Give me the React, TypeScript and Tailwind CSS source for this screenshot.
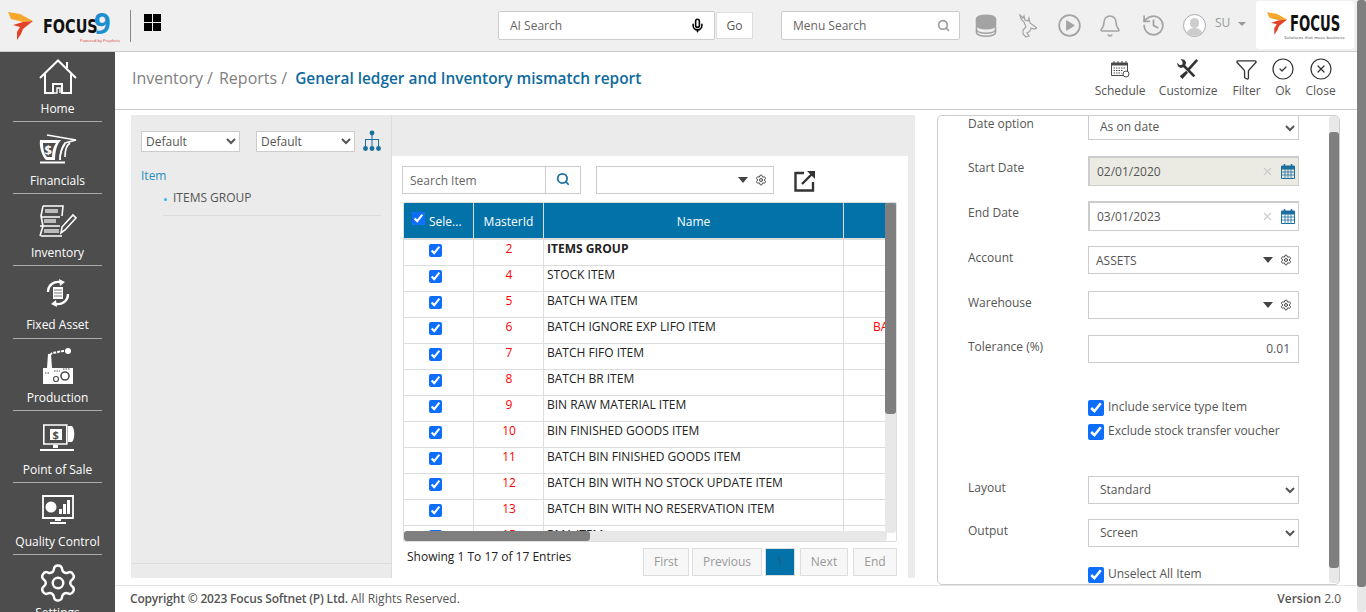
import React from 'react';
import { Bell, CircleCheck, CircleX, Funnel, History, Mic, Search, Settings, X } from 'lucide-react';

const ROWS = [
  { id: 2, name: 'ITEMS GROUP', bold: true },
  { id: 4, name: 'STOCK ITEM' },
  { id: 5, name: 'BATCH WA ITEM' },
  { id: 6, name: 'BATCH IGNORE EXP LIFO ITEM', extra: 'BA' },
  { id: 7, name: 'BATCH FIFO ITEM' },
  { id: 8, name: 'BATCH BR ITEM' },
  { id: 9, name: 'BIN RAW MATERIAL ITEM' },
  { id: 10, name: 'BIN FINISHED GOODS ITEM' },
  { id: 11, name: 'BATCH BIN FINISHED GOODS ITEM' },
  { id: 12, name: 'BATCH BIN WITH NO STOCK UPDATE ITEM' },
  { id: 13, name: 'BATCH BIN WITH NO RESERVATION ITEM' },
  { id: 15, name: 'RMA ITEM' },
];

const Flame = ({ className }: { className: string }) => (
  <svg viewBox="0 0 26 28" className={className}>
    <polygon points="0,0 12,2 25,9 15,10 7,8 3,7" fill="#f7a72b" />
    <polygon points="25,9 15,17 13,22 9,28 9,20 12,15 5,13 15,10" fill="#e4432a" />
  </svg>
);

const HomeIcon = () => (
  <svg viewBox="0 0 38 36" className="w-[38px] h-[36px]" fill="none" stroke="white" strokeWidth="2">
    <path d="M1 19 19 1.5 37 19M6 15v19h8v-9h9v9h9V15M28 9V3" />
    <path d="M14 34h4v-5h3v5" strokeWidth="1.4" />
  </svg>
);

const FinancialsIcon = () => (
  <svg viewBox="0 0 38 30" className="w-[38px] h-[30px]" fill="none" stroke="white" strokeWidth="1.6">
    <path d="M8 1 37 6 26 9c-3 4-5 10-5 17" />
    <path d="M1 6h21c-4 4-6 11-6 20H7C3 22 0 13 1 6z" fill="white" stroke="none" />
    <path d="M4 9h13c-3 4-4 9-4 14H8C5 20 4 14 4 9z" fill="#4d4d4d" stroke="none" />
    <path d="M26 10c-3 4-5 10-5 16M31 9c-3 2-5 8-5 14" />
    <path d="M1 28.5h25" strokeWidth="2" />
    <text x="5.5" y="21" fontSize="13" fontWeight="700" fill="white" stroke="none" fontFamily="'Open Sans', sans-serif">$</text>
  </svg>
);

const InventoryIcon = () => (
  <svg viewBox="0 0 38 32" className="w-[38px] h-[32px]" fill="none" stroke="white" strokeWidth="1.6">
    <path d="M4 1h20l-1 10M2 12h19M1 21h20M2 31h21" />
    <path d="M4 1 2 11l2 10-3 10" />
    <path d="M6 4h13v4H6zM5 14h12v4H5zM5 24h15v4H5z" fill="#bbb" stroke="none" />
    <path d="M22 28l1-6L34 10l3 3-11 12z" strokeWidth="1.6" />
  </svg>
);

const FixedAssetIcon = () => (
  <svg viewBox="0 0 24 28" className="w-[24px] h-[28px]" fill="none" stroke="white" strokeWidth="2.4">
    <path d="M2 13C2 6 8 2 14 3" />
    <path d="M22 15c0 7-6 11-12 10" />
    <path d="M13 0l6 3-5 4zM11 28l-6-3 5-4z" fill="white" stroke="none" />
    <path d="M7 8h10v12H7z" fill="white" stroke="none" />
    <path d="M8 11h8M8 14h8M8 17h8" stroke="#777" strokeWidth="1" />
  </svg>
);

const ProductionIcon = () => (
  <svg viewBox="0 0 32 36" className="w-[32px] h-[36px]">
    <path d="M1 36V20h4l1-14h3l1 14h21v16z" fill="white" />
    <path d="M8 7c2-3 5-2 8-3s5-1 8-1" fill="none" stroke="white" strokeWidth="2" strokeDasharray="3 1" />
    <circle cx="26" cy="3" r="3" fill="white" />
    <circle cx="23" cy="28" r="4" fill="white" stroke="#4d4d4d" strokeWidth="1.6" />
    <circle cx="14" cy="31" r="2.5" fill="white" stroke="#4d4d4d" strokeWidth="1.2" />
    <path d="M3 25h5M12 23h6M21 21h7" stroke="#4d4d4d" strokeWidth="1.2" strokeDasharray="1.5 1" />
  </svg>
);

const PosIcon = () => (
  <svg viewBox="0 0 36 28" className="w-[36px] h-[28px]">
    <path d="M3.8 1h23v19h-23z" fill="none" stroke="white" strokeWidth="1.6" />
    <path d="M28 2h4c3 3 3 13 0 16h-4z" fill="white" />
    <path d="M13 21h5v3h-5zM0 25h34v2H0z" fill="white" />
    <path d="M10 5h12v11H10z" fill="white" />
    <text x="12.5" y="15" fontSize="11" fontWeight="700" fill="#4d4d4d" fontFamily="'Open Sans', sans-serif">$</text>
  </svg>
);

const QualityIcon = () => (
  <svg viewBox="0 0 34 30" className="w-[34px] h-[30px]">
    <path d="M2 1h30v22H2z" fill="none" stroke="white" strokeWidth="1.8" />
    <circle cx="10" cy="12" r="5.5" fill="white" />
    <path d="M18 19h3v-5h-3zM22 19h3V9h-3zM26 19h3V5h-3z" fill="white" />
    <path d="M14 24h6v2h-6zM9 27h16v2H9z" fill="white" />
  </svg>
);

const NAV = [
  { label: 'Home', icon: <HomeIcon /> },
  { label: 'Financials', icon: <FinancialsIcon /> },
  { label: 'Inventory', icon: <InventoryIcon /> },
  { label: 'Fixed Asset', icon: <FixedAssetIcon /> },
  { label: 'Production', icon: <ProductionIcon /> },
  { label: 'Point of Sale', icon: <PosIcon /> },
  { label: 'Quality Control', icon: <QualityIcon /> },
];

const DatabaseIcon = () => (
  <svg viewBox="0 0 22 24" className="w-[22px] h-[24px]" fill="#a3a3a3" stroke="#a3a3a3" strokeWidth="1.6">
    <ellipse cx="11" cy="5" rx="9.5" ry="3.8" />
    <path d="M1.5 5v6c0 2.2 4.2 3.8 9.5 3.8s9.5-1.6 9.5-3.8V5c0 2.2-4.2 3.8-9.5 3.8S1.5 7.2 1.5 5z" />
    <path d="M1.5 12v6.5c0 2.2 4.2 3.8 9.5 3.8s9.5-1.6 9.5-3.8V12" fill="none" />
    <path d="M1.5 16c1 2 4.5 3.2 9.5 3.2s8.5-1.2 9.5-3.2" fill="none" />
  </svg>
);

const DeerIcon = () => (
  <svg viewBox="0 0 18 24" className="w-[18px] h-[24px]" fill="none" stroke="#a3a3a3" strokeWidth="1.2">
    <path d="M1 1l3 3 1-2 1 4 3 1 1-3 1 5 7 5-3 1-3-1c0 3-2 4-4 5l2 3-3 1-3-3v-4l3-3-2-5-3-3z" />
  </svg>
);

const PlayIcon = () => (
  <svg viewBox="0 0 24 24" className="w-[23px] h-[23px]" fill="#a3a3a3" stroke="#a3a3a3">
    <circle cx="12" cy="12" r="10.8" fill="none" strokeWidth="1.8" />
    <path d="M9 7l8 5-8 5z" />
  </svg>
);

const ScheduleIcon = () => (
  <svg viewBox="0 0 20 18" className="w-[20px] h-[18px]" fill="none" stroke="#4a4a4a">
    <path d="M1.5 3.5h16v12h-16z" />
    <path d="M1.5 3h16v2h-16z" fill="#4a4a4a" />
    <path d="M4 1v3M8 1v3M12 1v3M16 1v3" />
    <path d="M3.5 8h12M3.5 10.5h10M3.5 13h8" strokeDasharray="1.5 1" />
    <circle cx="16" cy="14" r="3" fill="white" />
  </svg>
);

const CalendarIcon = () => (
  <svg viewBox="0 0 14 15" className="w-[14px] h-[15px]" fill="none" stroke="#1a6f9f">
    <path d="M.5 2.5h13v12H.5z" />
    <path d="M.5 2h13v3H.5z" fill="#1a6f9f" />
    <path d="M3.5 0v3M10.5 0v3" strokeWidth="1.5" />
    <path d="M.5 8h13M.5 11h13M4 5v9M7 5v9M10 5v9" strokeWidth=".8" />
  </svg>
);

const TreeIcon = () => (
  <svg viewBox="0 0 18 22" className="w-[18px] h-[22px]" fill="#1a6f9f">
    <circle cx="9" cy="3" r="2.4" />
    <path d="M8.5 4h1v5h6.5v7h-1v-6H9.5v6h-1v-6H3v6H2V9h6.500z" />
    <circle cx="2.5" cy="18.5" r="2.4" />
    <circle cx="9" cy="18.5" r="2.4" />
    <circle cx="15.5" cy="18.5" r="2.4" />
  </svg>
);

const ExportIcon = () => (
  <svg viewBox="0 0 22 22" className="w-[22px] h-[22px]" fill="none" stroke="#333" strokeWidth="2.4">
    <path d="M10 3H1.5v17.500h17.500V12" />
    <path d="M8 14 19 3" />
    <path d="M13 1h8v8z" fill="#333" stroke="none" />
  </svg>
);

const Caret = () => <span className="w-0 h-0 border-x-[5px] border-x-transparent border-t-[6px] border-t-[#444]" />;

const ToolButton = ({ icon, label, className }: { icon: React.ReactNode; label: string; className: string }) => (
  <div className={`flex flex-col items-center ${className}`}>
    <div className="h-[22px] flex items-center justify-center">{icon}</div>
    <span className="text-[12px] leading-[16px] mt-[3px] text-[#555]">{label}</span>
  </div>
);

const FieldLabel = ({ text, top = 4 }: { text: string; top?: number }) => (
  <div className={`w-[120px] shrink-0 text-[12px] leading-[16px] text-[#555] ${top === 0 ? 'pt-0' : 'pt-[4px]'}`}>{text}</div>
);

const ComboField = ({ value }: { value: string }) => (
  <div className="w-[211px] h-[28px] border border-[#ccc] bg-white flex items-center pl-[7px] pr-[6px] text-[12px] text-[#555]">
    <span className="flex-1 pt-[2px]">{value}</span>
    <Caret />
    <Settings size={12} className="ml-[7px] text-[#444]" />
  </div>
);

const DateField = ({ value, disabled }: { value: string; disabled?: boolean }) => (
  <div className={`w-[211px] h-[30px] border-2 border-[#ccc] border-r border-b flex items-center pl-[7px] pr-[3px] text-[12px] text-[#555] ${disabled ? 'bg-[#ebebe4]' : 'bg-white'}`}>
    <span className="flex-1">{value}</span>
    <X size={13} className="text-[#ccc] mr-[7px]" />
    <CalendarIcon />
  </div>
);

const CheckRow = ({ label, className }: { label: string; className: string }) => (
  <label className={`flex items-center ml-[120px] text-[12px] leading-[16px] text-[#555] ${className}`}>
    <input type="checkbox" defaultChecked className="w-[16px] h-[16px] m-0 accent-[#0d6efd]" />
    <span className="ml-[4px] -mt-[2px]">{label}</span>
  </label>
);

const FormSelect = ({ value, h, noTop }: { value: string; h: string; noTop?: boolean }) => (
  <select defaultValue={value} className={`w-[211px] ${h} border border-[#ccc] ${noTop ? 'border-t-0' : ''} bg-white text-[12px] text-[#555] pl-[7px] pr-[4px] pb-[2px]`}>
    <option>{value}</option>
  </select>
);

export default function App() {
  return (
    <div className="w-[1366px] h-[612px] overflow-hidden relative flex flex-col bg-white text-[#555] font-['Open_Sans','Liberation_Sans',sans-serif]">
      {/* Top bar */}
      <div className="h-[52px] shrink-0 bg-[#f0f0f0] border-b border-[#ccc] flex items-center">
        <Flame className="w-[26px] h-[28px] ml-[8px] shrink-0" />
        <div className="ml-[9px] relative w-[72px] h-[30px] flex items-center">
          <span className="origin-left scale-x-[.72] font-['DejaVu_Sans',sans-serif] font-bold text-[20px] leading-[22px] text-[#111]">FOCUS</span>
          <span className="absolute left-[51px] -top-[2px] text-[29px] leading-[28px] font-bold text-[#1c8fd0]">9</span>
          <span className="absolute left-[37px] top-[27px] text-[4px] leading-[5px] text-[#d33] whitespace-nowrap">Powered by Prophets</span>
        </div>
        <div className="w-px h-[32px] bg-[#888] ml-[15px]" />
        <div className="grid grid-cols-2 gap-px w-[17px] h-[17px] ml-[13px] -mt-[6px]">
          <span className="bg-black" /><span className="bg-black" /><span className="bg-black" /><span className="bg-black" />
        </div>
        <div className="ml-[337px] w-[217px] h-[29px] bg-white border border-[#ccc] rounded-[2px] flex items-center pl-[11px] pr-[9px] text-[12px] text-[#666]">
          <span className="flex-1">AI Search</span>
          <Mic size={15} className="text-black" strokeWidth={2.5} />
        </div>
        <div className="ml-px w-[37px] h-[27px] bg-white border border-[#ddd] flex items-center justify-center text-[12px] text-[#555]">Go</div>
        <div className="ml-[28px] w-[179px] h-[29px] bg-white border border-[#ccc] rounded-[2px] flex items-center pl-[11px] pr-[9px] text-[12px] text-[#666]">
          <span className="flex-1">Menu Search</span>
          <Search size={13} className="text-[#999]" strokeWidth={3} />
        </div>
        <div className="ml-[15px]"><DatabaseIcon /></div>
        <div className="ml-[22px]"><DeerIcon /></div>
        <div className="ml-[21px]"><PlayIcon /></div>
        <Bell size={24} className="ml-[17px] text-[#a3a3a3]" strokeWidth={1.5} />
        <History size={25} className="ml-[19px] text-[#a3a3a3]" strokeWidth={1.7} />
        <div className="ml-[17px] w-[23px] h-[23px] rounded-full border border-[#aaa] bg-white overflow-hidden flex flex-col items-center">
          <span className="w-[9px] h-[10px] rounded-full bg-[#ccc] mt-[3px]" />
          <span className="w-[17px] h-[8px] rounded-t-full bg-[#ccc]" />
        </div>
        <span className="ml-[9px] text-[12px] text-[#999] -mt-[5px]">SU</span>
        <span className="ml-[8px] -mt-[4px] w-0 h-0 border-x-[4px] border-x-transparent border-t-[4px] border-t-[#999]" />
        <div className="ml-[10px] w-[98px] h-[48px] -mt-[2px] bg-white rounded-[3px] relative flex items-center pl-[11px]">
          <Flame className="w-[21px] h-[23px] shrink-0 -mt-[3px]" />
          <div className="relative h-[30px] w-[50px] ml-[2px]">
            <span className="absolute left-0 top-[3px] origin-left scale-x-[.63] font-['DejaVu_Sans',sans-serif] font-bold text-[21px] leading-[22px] text-[#111]">FOCUS</span>
            <span className="absolute -left-[6px] top-[25px] text-[4px] leading-[5px] text-[#333] whitespace-nowrap tracking-[.2px]">Solutions that move business</span>
          </div>
        </div>
      </div>

      <div className="flex-1 flex min-h-0">
        {/* Sidebar */}
        <div className="w-[115px] shrink-0 bg-[#4d4d4d] overflow-hidden text-white">
          {NAV.map((n, i) => (
            <div key={n.label} className={`mx-[13px] border-b border-[#aaa] flex flex-col items-center ${i === 0 ? 'h-[70px]' : i === 3 ? 'h-[73px]' : 'h-[72px]'}`}>
              <div className={`flex items-center justify-center ${i === 0 ? 'h-[49px]' : 'h-[51px] pt-[2px]'}`}>{n.icon}</div>
              <span className="text-[12px] leading-[16px] whitespace-nowrap">{n.label}</span>
            </div>
          ))}
          <div className="flex flex-col items-center pt-[7px]">
            <Settings size={42} strokeWidth={1.4} />
            <span className="text-[12px] leading-[16px] mt-[1px]">Settings</span>
          </div>
        </div>

        {/* Main column */}
        <div className="flex-1 min-w-0 flex flex-col">
          <div className="h-[58px] shrink-0 border-b border-[#ccc] mr-[9px] flex items-start">
            <div className="ml-[17px] mt-[14px] flex items-baseline text-[16px] leading-[24px] whitespace-nowrap">
              <span className="text-[#7f7f7f]">Inventory /</span>
              <span className="text-[#7f7f7f] ml-[6px]">Reports /</span>
              <span className="text-[#0f6a9c] font-semibold ml-[8px] text-[15.4px]">General ledger and Inventory mismatch report</span>
            </div>
            <div className="ml-auto mr-[19px] w-[250px] h-full flex pt-[6px]">
              <ToolButton icon={<ScheduleIcon />} label="Schedule" className="w-[60px] ml-[3px]" />
              <ToolButton icon={<svg viewBox="0 0 24 24" className="w-[22px] h-[22px]" fill="#333"><path d="M4 1l4 1 2 3-1 3 11 11-2 2L7 10 4 11 1 9 0 5l3 3 3-1 0-3zM21 1l2 2-9 10-2-2zM10 14l2 2-6 7-3-3z" /></svg>} label="Customize" className="w-[64px] ml-[8px]" />
              <ToolButton icon={<Funnel size={23} strokeWidth={1.4} className="text-[#333]" />} label="Filter" className="w-[36px] ml-[10px]" />
              <ToolButton icon={<CircleCheck size={24} strokeWidth={1.2} className="text-[#333]" />} label="Ok" className="w-[24px] ml-[7px]" />
              <ToolButton icon={<CircleX size={24} strokeWidth={1.2} className="text-[#333]" />} label="Close" className="w-[36px] ml-[8px]" />
            </div>
          </div>

          <div className="flex-1 min-h-0 flex pt-[5px]">
            {/* Report area */}
            <div className="ml-[16px] w-[784px] h-[463px] bg-[#ebebeb] flex">
              <div className="w-[260px] shrink-0 flex flex-col relative">
                <div className="flex items-center pl-[10px] pt-[15px]">
                  <select className="w-[99px] h-[21px] border border-[#ccc] bg-white text-[12px] text-[#555]"><option>Default</option></select>
                  <select className="ml-[16px] w-[99px] h-[21px] border border-[#ccc] bg-white text-[12px] text-[#555]"><option>Default</option></select>
                  <div className="ml-[8px]"><TreeIcon /></div>
                </div>
                <div className="ml-[10px] mt-[16px] text-[12px] leading-[16px] text-[#2a8fc4]">Item</div>
                <div className="ml-[32px] mt-[5px] w-[218px] h-[27px] border-b border-[#ddd] flex text-[12px] leading-[16px] text-[#555]">
                  <span className="w-[3px] h-[3px] rounded-full bg-[#35b3ee] mt-[9px] ml-px" />
                  <span className="ml-[6px] mt-[1px]">ITEMS GROUP</span>
                </div>
                <div className="mt-auto mb-[14px] border-t border-[#ddd]" />
              </div>
              <div className="w-px bg-[#ddd]" />
              <div className="flex-1 min-w-0 flex flex-col pt-[41px]">
                <div className="w-[516px] h-[422px] bg-white pl-[11px] pr-[10px] pt-[10px] flex flex-col">
                  <div className="flex items-center h-[28px] shrink-0 -ml-px">
                    <div className="w-[179px] h-[28px] border border-[#ccc] flex items-center text-[12px] text-[#666]">
                      <span className="flex-1 pl-[7px] pt-[1px]">Search Item</span>
                      <span className="w-[35px] h-full border-l border-[#ccc] flex items-center justify-center">
                        <Search size={14} strokeWidth={3} className="text-[#1a6f9f] -mt-[3px]" />
                      </span>
                    </div>
                    <div className="ml-[15px] w-[178px] h-[28px] border border-[#ccc] flex items-center justify-end pr-[6px]">
                      <Caret />
                      <Settings size={12} className="ml-[7px] text-[#444]" />
                    </div>
                    <div className="ml-[20px] mt-[1px]"><ExportIcon /></div>
                  </div>
                  {/* Grid */}
                  <div className="relative mt-[8px] w-[494px] h-[340px] border border-[#ddd] rounded-[2px] overflow-hidden shrink-0">
                    <div className="flex h-[37px] bg-[#0272a9] border-b-2 border-[#ddd] text-white text-[12px]">
                      <div className="w-[70px] flex items-center pl-[8px] border-r border-[#ddd]">
                        <input type="checkbox" defaultChecked className="w-[13px] h-[13px] m-0 -mt-[5px] accent-[#0d6efd]" />
                        <span className="ml-[4px] pt-[2px]">Sele...</span>
                      </div>
                      <div className="w-[70px] flex items-center justify-center pt-[2px] border-r border-[#ddd]">MasterId</div>
                      <div className="w-[300px] flex items-center justify-center pt-[2px] border-r border-[#ddd]">Name</div>
                      <div className="flex-1" />
                    </div>
                    {ROWS.map(r => (
                      <div key={r.id} className="flex h-[26px] border-b border-[#ddd] text-[12px] leading-[16px]">
                        <div className="w-[70px] flex justify-center pt-[4px] pr-[7px] border-r border-[#ddd]">
                          <input type="checkbox" defaultChecked className="w-[13px] h-[13px] m-0 accent-[#0d6efd]" />
                        </div>
                        <div className="w-[70px] text-center pt-[1px] pl-px text-[#f00] border-r border-[#ddd]">{r.id}</div>
                        <div className={`w-[300px] pl-[3px] pt-[1px] text-[#222] border-r border-[#ddd] whitespace-nowrap ${r.bold ? 'font-bold' : ''}`}>{r.name}</div>
                        <div className="flex-1 pl-[29px] pt-[1px] text-[#f00] overflow-hidden">{r.extra}</div>
                      </div>
                    ))}
                    {/* Scrollbars */}
                    <div className="absolute right-0 top-0 w-[11px] h-[330px] bg-[#e8e8e8] rounded-[3px]">
                      <div className="w-full h-[211px] bg-[#7f7f7f] rounded-[3px]" />
                    </div>
                    <div className="absolute left-0 bottom-0 w-[483px] h-[10px] bg-[#e8e8e8] rounded-[3px]">
                      <div className="h-full w-[186px] bg-[#7f7f7f] rounded-[3px]" />
                    </div>
                  </div>
                  <div className="flex items-start w-[494px] mt-[6px]">
                    <span className="ml-[4px] text-[12px] leading-[16px] text-[#222] mt-[1px]">Showing 1 To 17 of 17 Entries</span>
                    <div className="ml-auto flex text-[12px] text-[#999]">
                      <span className="w-[46px] h-[28px] flex items-center justify-center border border-[#ddd] bg-[#f7f7f7]">First</span>
                      <span className="ml-[3px] w-[70px] h-[28px] flex items-center justify-center border border-[#ddd] bg-[#f7f7f7]">Previous</span>
                      <span className="ml-[3px] w-[30px] h-[28px] flex items-center justify-center border border-[#ddd] bg-[#0272a9] text-[#2a5d78]">1</span>
                      <span className="ml-[5px] w-[48px] h-[28px] flex items-center justify-center border border-[#ddd] bg-[#f7f7f7]">Next</span>
                      <span className="ml-[5px] w-[44px] h-[28px] flex items-center justify-center border border-[#ddd] bg-[#f7f7f7]">End</span>
                    </div>
                  </div>
                </div>
              </div>
            </div>

            {/* Form panel */}
            <div className="ml-[22px] relative w-[403px] h-[470px] border border-[#ccc] rounded-[5px] overflow-hidden pl-[30px]">
              <div className="flex">
                <FieldLabel text="Date option" top={0} />
                <FormSelect value="As on date" h="h-[24px]" noTop />
              </div>
              <div className="flex mt-[16px]">
                <FieldLabel text="Start Date" />
                <DateField value="02/01/2020" disabled />
              </div>
              <div className="flex mt-[15px]">
                <FieldLabel text="End Date" />
                <DateField value="03/01/2023" />
              </div>
              <div className="flex mt-[15px]">
                <FieldLabel text="Account" />
                <ComboField value="ASSETS" />
              </div>
              <div className="flex mt-[17px]">
                <FieldLabel text="Warehouse" />
                <ComboField value="" />
              </div>
              <div className="flex mt-[16px]">
                <FieldLabel text="Tolerance (%)" />
                <div className="w-[211px] h-[28px] border border-[#ccc] bg-white flex items-center justify-end pr-[8px] text-[12px]">0.01</div>
              </div>
              <CheckRow label="Include service type Item" className="mt-[37px]" />
              <CheckRow label="Exclude stock transfer voucher" className="mt-[8px]" />
              <div className="flex mt-[36px]">
                <FieldLabel text="Layout" />
                <FormSelect value="Standard" h="h-[28px]" />
              </div>
              <div className="flex mt-[15px]">
                <FieldLabel text="Output" />
                <FormSelect value="Screen" h="h-[28px]" />
              </div>
              <CheckRow label="Unselect All Item" className="mt-[20px]" />
              <div className="absolute right-0 top-0 w-[10px] h-[467px] bg-[#e8e8e8] rounded-[3px] flex flex-col">
                <div className="mt-[16px] h-[436px] bg-[#7f7f7f] rounded-[3px]" />
              </div>
            </div>
          </div>

          {/* Footer */}
          <div className="h-[27px] shrink-0 mr-[9px] border-t border-[#e5e5e5] flex items-center pl-[15px] pr-[16px] text-[12px] text-[#555]">
            <span className="font-semibold tracking-[-0.18px]">Copyright © 2023 Focus Softnet (P) Ltd.</span>
            <span className="ml-[3px]">All Rights Reserved.</span>
            <span className="ml-auto font-semibold">Version <span className="font-normal">2.0</span></span>
          </div>
        </div>
      </div>

      {/* Page scrollbar */}
      <div className="absolute right-0 top-0 w-[9px] h-full bg-[#e8e8e8] rounded-[3px]">
        <div className="w-full h-[587px] bg-[#7f7f7f] rounded-[3px]" />
      </div>
    </div>
  );
}
